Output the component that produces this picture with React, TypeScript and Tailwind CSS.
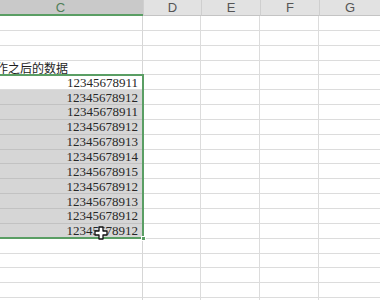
import React from 'react'

const ROW_H = 'h-[14.85px]'

const values = [
  '12345678911',
  '12345678912',
  '12345678911',
  '12345678912',
  '12345678913',
  '12345678914',
  '12345678915',
  '12345678912',
  '12345678913',
  '12345678912',
  '12345678912',
]

// rows below the header; values start on the 5th visible row
const rows = Array.from({ length: 20 }, (_, i) => {
  const v = i >= 4 && i < 4 + values.length ? values[i - 4] : null
  return { label: i === 3 ? '操作之后的数据' : null, value: v, active: i === 4 }
})

function MoveCursor() {
  return (
    <svg width="14" height="14" viewBox="0 0 14 14" className="absolute left-[94px] top-[226px]">
      <path
        d="M5 1h4v4h4v4h-4v4h-4v-4h-4v-4h4z"
        fill="#fff"
        stroke="#111"
        strokeWidth="1.3"
        strokeLinejoin="round"
      />
    </svg>
  )
}

export default function App() {
  return (
    <div className="relative w-[380px] h-[300px] overflow-hidden bg-white font-['Liberation_Sans',sans-serif]">
      {/* column headers */}
      <div className="flex h-[16px] text-[13px] text-[#555]">
        <div className="w-[143px] bg-[#c9c9c9] border-b-2 border-[#5a9e64] flex items-center justify-center pr-[22px] text-[#4f7f57] leading-none">
          C
        </div>
        {['D', 'E', 'F'].map((c, i) => (
          <div
            key={c}
            className={`${i === 0 ? 'w-[58px]' : 'w-[59px]'} bg-[#e2e2e2] border-l border-[#cfcfcf] border-b border-b-[#c4c4c4] flex items-center justify-center leading-none`}
          >
            {c}
          </div>
        ))}
        <div className="flex-1 bg-[#e2e2e2] border-l border-[#cfcfcf] border-b border-b-[#c4c4c4] flex items-center justify-center leading-none">
          G
        </div>
      </div>

      {/* sheet body */}
      {rows.map((r, i) => (
        <div key={i} className={`flex ${ROW_H}`}>
          <div
            className={`relative w-[143px] border-b border-r flex items-center justify-end pr-[4px] ${
              r.value && !r.active ? 'bg-[#d6d6d6] border-b-[#c2c2c2]' : 'border-b-[#dcdcdc]'
            } border-r-[#d6d6d6]`}
          >
            {r.label && (
              <span className="absolute left-[-16px] top-[-2px] whitespace-nowrap text-[12px] text-[#1e1e1e] font-['Noto_Sans_CJK_SC',sans-serif]">
                {r.label}
              </span>
            )}
            {r.value && (
              <span className="text-[13px] leading-none text-[#262626] font-['Liberation_Serif',serif]">{r.value}</span>
            )}
          </div>
          <div className="w-[58px] border-b border-r border-[#dcdcdc]" />
          <div className="w-[59px] border-b border-r border-[#dcdcdc]" />
          <div className="w-[59px] border-b border-r border-[#dcdcdc]" />
          <div className="flex-1 border-b border-[#dcdcdc]" />
        </div>
      ))}

      {/* selection outline and fill handle */}
      <div className="absolute left-[-4px] top-[74px] w-[148px] h-[165px] border-2 border-[#5a9e64] pointer-events-none" />
      <div className="absolute left-[141px] top-[236px] w-[5px] h-[5px] bg-[#5a9e64] border border-white" />

      <MoveCursor />
    </div>
  )
}
